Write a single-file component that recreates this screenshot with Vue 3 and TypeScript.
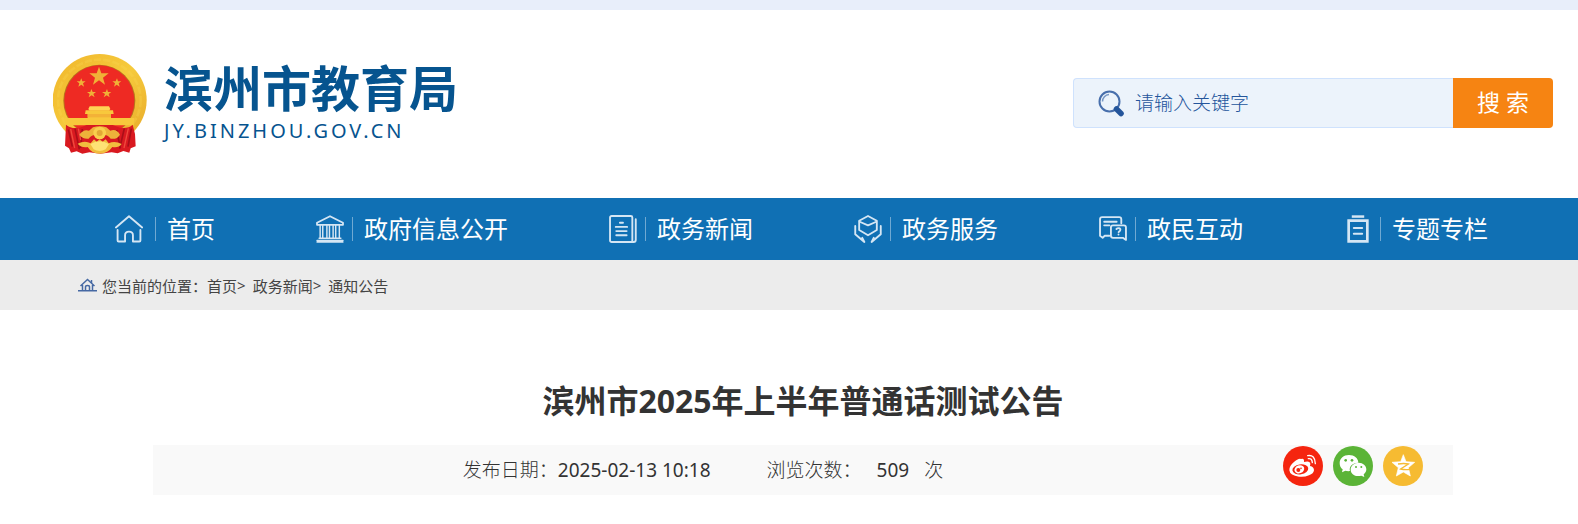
<script setup lang="ts">
import { ref } from 'vue'

interface NavItem {
  icon: string
  label: string
}

const keyword = ref('')

const navItems: NavItem[] = [
  { icon: 'home', label: '首页' },
  { icon: 'hall', label: '政府信息公开' },
  { icon: 'news', label: '政务新闻' },
  { icon: 'service', label: '政务服务' },
  { icon: 'chat', label: '政民互动' },
  { icon: 'topic', label: '专题专栏' },
]
</script>

<template>
  <div class="page">
    <header class="header">
      <a class="brand" href="#" aria-label="滨州市教育局">
        <svg class="emblem" viewBox="39 42 282 300" aria-hidden="true">
          <defs>
            <linearGradient id="gold" x1="0" y1="0" x2="1" y2="1">
              <stop offset="0" stop-color="#f0b62c" />
              <stop offset="0.5" stop-color="#f6ca3c" />
              <stop offset="1" stop-color="#e7a829" />
            </linearGradient>
          </defs>
          <ellipse cx="179" cy="180" rx="141" ry="138" fill="url(#gold)" />
          <ellipse cx="178" cy="180" rx="124" ry="121" fill="none" stroke="#fbdb58" stroke-width="8" stroke-dasharray="22 6" opacity=".25" />
          <ellipse cx="178" cy="182" rx="108" ry="108" fill="#b8741c" />
          <ellipse cx="178" cy="182" rx="105" ry="106" fill="#ee2a23" />
          <g fill="#f0b137">
            <path d="M177 80l7 20 22 0-17 13 6 21-18-13-18 13 6-21-17-13 22 0z" />
            <path d="M124 115l3 9 10 0-8 6 3 10-8-6-9 6 3-10-8-6 10 0z" />
            <path d="M231 115l3 9 10 0-8 6 3 10-9-6-8 6 3-10-8-6 10 0z" />
            <path d="M154 147l4 9 10 0-8 6 4 10-9-6-9 6 3-10-8-6 10 0z" />
            <path d="M201 147l3 9 10 0-8 6 3 10-9-6-9 6 4-10-9-6 11 0z" />
          </g>
          <path d="M149 199h58l4 8-4 5h-58l-4-5z" fill="#ffd454" />
          <path d="M137 211h82l2 11h-8v12h70l-2 22H76l-3-22h70v-12h-8z" fill="#f8c83c" />
          <path d="M143 222h70v10h-70z" fill="#f3b237" />
          <path d="M78 254q16 14 42 9l20-8h78l22 8q24 4 38-9l7 28 2 37-15 6-4 13-18-5-17 7-18-3-34 4-33-4-21 4-17-7-17 4-6-13-12-8z" fill="#d91920" />
          <path d="M85 269l12 51M105 266l13 62M127 267l-5 57M274 266l-10 54M253 265l-14 61M230 270l11 54" fill="none" stroke="#a90f18" stroke-width="5" />
          <path d="M92 267l12 57M115 266l7 34M265 265l-13 59" fill="none" stroke="#f04a3d" stroke-width="4" />
          <path d="M118 284q13-18 29-12l12-10q20-7 40 0l12 10q18-7 29 12-9 15-28 12-9-13-23-12h-20q-15 0-23 12-18 2-28-12z" fill="#edb23a" />
          <circle cx="179" cy="279" r="19" fill="#f9cf4d" />
          <circle cx="179" cy="279" r="9" fill="#e3a835" />
          <path d="M113 311q22-11 39-1l10-12 8 7 9-7 9 7 9-7 9 12q18-9 39 2-10 13-28 9-14 20-38 20t-36-20q-19 3-30-10z" fill="#f1bd3e" />
          <path d="M151 312q28-16 56 0l-10 16q-19 10-36 0z" fill="#fee275" />
        </svg>
        <span class="brand-text">
          <strong class="brand-name">滨州市教育局</strong>
          <span class="brand-url">JY.BINZHOU.GOV.CN</span>
        </span>
      </a>

      <form class="search" role="search" @submit.prevent>
        <div class="search-field">
          <svg class="search-icon" viewBox="0 0 27 27" fill="none" aria-hidden="true">
            <circle cx="11.5" cy="11.5" r="10" stroke="#486fac" stroke-width="2" />
            <path d="M4.500 11.500A7 7 0 0 1 11 4.500" stroke="#7898c4" stroke-width="1.500" />
            <path d="M18.500 19l4.500 4.500" stroke="#24559b" stroke-width="5.500" stroke-linecap="round" />
          </svg>
          <input v-model="keyword" class="search-input" type="text" placeholder="请输入关键字" aria-label="请输入关键字" />
        </div>
        <button class="search-button" type="submit">搜 索</button>
      </form>
    </header>

    <nav class="nav">
      <a v-for="item in navItems" :key="item.label" class="nav-item" href="#">
        <svg class="nav-icon" viewBox="0 0 27 27" fill="none" stroke="#d5e6f4" stroke-width="1.800" stroke-linejoin="round" stroke-linecap="round" aria-hidden="true">
          <template v-if="item.icon === 'home'">
            <path d="M.9 12L13.500 1.200 26.200 12" />
            <path d="M2.500 14.500v10q0 1 1 1h6.200v-6q0-3.500 3.800-3.500t3.800 3.500v6h6.200q1 0 1-1v-10" />
          </template>
          <template v-else-if="item.icon === 'hall'">
            <path d="M1 7.500L13.500 1.200 26 7.500v2H1z" />
            <path d="M4 10v12M6.500 10v12M10.500 10v12M13 10v12M16.500 10v12M19 10v12M22.500 10v12M3 22.500h21M1 26h25M1 24.500h25" stroke-width="1.400" />
          </template>
          <template v-else-if="item.icon === 'news'">
            <rect x="1" y="1" width="21.500" height="25" rx="1.500" />
            <path d="M25.800 4v20q0 2-2 2H20M10.500 7.500h3M6.500 11.500h11M7 15.500h10M7 19.500h10" />
          </template>
          <template v-else-if="item.icon === 'service'">
            <path d="M13.500 1l8.500 4.500v9l-8.500 5-8.500-5v-9z" />
            <path d="M5.500 6.500l8 3.500 8-3.500" />
            <path d="M1.200 10.500v8l8.800 7.500-2-4M25.800 10.500v8L17 26l2-4" />
          </template>
          <template v-else-if="item.icon === 'chat'">
            <path d="M21.500 8V4q0-2-2-2H3Q1 2 1 4v16l2.500 2 2-2H10M5 6.500h12M5 10h5" />
            <path d="M13.500 10h10.500q2 0 2 2v12l-3-2H13.500q-2 0-2-2v-8q0-2 2-2z" />
            <path d="M16.800 13.500q1-1 2.500-.8 2 .6 1 2.300l-1.400 1.500M18.800 18.700v.1" />
          </template>
          <template v-else>
            <path d="M7.500 1.500h12" stroke-width="2.400" stroke-linecap="butt" />
            <path d="M4.500 5.500h18v20h-18z" stroke-width="2.600" stroke-linejoin="miter" />
            <path d="M9.500 12.500h8M9.500 18h8" stroke-width="2" />
          </template>
        </svg>
        <span class="nav-label">{{ item.label }}</span>
      </a>
    </nav>

    <div class="crumbs">
      <svg class="crumb-icon" viewBox="0 0 19 14" fill="none" stroke="#4669a3" stroke-width="1.500" aria-hidden="true">
        <path d="M0 12.700h19M2.500 8L9.500 1.500 16.500 8M4.500 7v5.500M14.500 7v5.500" />
        <path d="M7.500 12.500V8.800q0-1.300 2-1.300t2 1.300v3.700M13.500 2v3" />
      </svg>
      <span>您当前的位置：</span>
      <a href="#">首页</a><span class="sep">&gt;</span>
      <a href="#">政务新闻</a><span class="sep">&gt;</span>
      <a href="#">通知公告</a>
    </div>

    <main class="article">
      <h1 class="title">滨州市2025年上半年普通话测试公告</h1>
      <div class="meta">
        <div class="meta-text">
          <span>发布日期：<span class="figure">2025-02-13 10:18</span></span>
          <span class="views"><span>浏览次数：</span><span class="figure">509</span><span>次</span></span>
        </div>
        <div class="share">
          <a href="#" aria-label="微博">
            <svg viewBox="0 0 120 120" aria-hidden="true">
              <circle cx="60" cy="60" r="60" fill="#f5250f" />
              <path d="M54 39q10-4 9 9 19-5 19 7-1 3-1 5 12 2 12 13-1 10-15 15-14 6-30 4-27-3-29-19-1-12 13-24 14-13 22-10z" fill="#fff" />
              <ellipse cx="52" cy="70" rx="24" ry="15" transform="rotate(-9 52 70)" fill="#f5250f" />
              <ellipse cx="49" cy="70" rx="15" ry="12" transform="rotate(-20 49 70)" fill="#fff" />
              <circle cx="46" cy="72" r="6" fill="#f5250f" />
              <circle cx="54" cy="67" r="2.500" fill="#f5250f" />
              <path d="M74 29q22-4 23 24M76 38q11-2 12 12" fill="none" stroke="#fff" stroke-width="4" stroke-linecap="round" />
            </svg>
          </a>
          <a href="#" aria-label="微信">
            <svg viewBox="0 0 120 120" aria-hidden="true">
              <circle cx="60" cy="60" r="60" fill="#5bb437" />
              <path d="M48 27c16 0 28 10 28 23-17 0-29 12-25 25-5 1-10 0-14-1l-10 5 2-9c-6-4-9-11-9-19 0-14 12-24 28-24z" fill="#fff" />
              <path d="M77 50c13 0 23 9 23 20 0 6-3 11-8 15l2 8-9-4c-18 5-32-5-32-18 0-12 11-21 24-21z" fill="#fff" />
              <g fill="#5bb437"><circle cx="38" cy="43" r="4" /><circle cx="57" cy="43" r="4" /><circle cx="69" cy="63" r="3" /><circle cx="85" cy="63" r="3" /></g>
            </svg>
          </a>
          <a href="#" aria-label="QQ空间">
            <svg viewBox="0 0 120 120" aria-hidden="true">
              <circle cx="60" cy="60" r="60" fill="#f6bb32" />
              <path d="M61 26l8 21 26 2-19 16 6 25-21-12-21 12 6-25-19-16 26-2z" fill="#fff" stroke="#fff" stroke-width="2" stroke-linejoin="round" />
              <path d="M45 54q18-3 31 0L53 69q13 3 28 1" fill="none" stroke="#f6bb32" stroke-width="4" />
            </svg>
          </a>
        </div>
      </div>
    </main>
  </div>
</template>

<style>
body {
  margin: 0;
  background: #fff;
}
</style>

<style scoped>
.page {
  border-top: 10px solid #e8eefa;
  font-family: "Noto Sans", "Noto Sans CJK SC", sans-serif;
  color: #333;
}

a {
  color: inherit;
  text-decoration: none;
}

svg {
  display: block;
  flex: none;
}

.header {
  display: flex;
  align-items: flex-start;
  justify-content: space-between;
  padding: 44px 25px 44px 53px;
}

.brand {
  display: flex;
  gap: 17px;
  color: #06548f;
}

.emblem {
  width: 94px;
  height: 100px;
}

.brand-text {
  display: flex;
  flex-direction: column;
  padding-top: 5px;
}

.brand-name {
  font-size: 49px;
  line-height: 58px;
  font-weight: 700;
}

.brand-url {
  font-size: 20px;
  line-height: 28px;
  letter-spacing: 3px;
}

.search {
  display: flex;
  width: 480px;
  height: 50px;
  margin-top: 24px;
}

.search-field {
  display: flex;
  flex: 1;
  align-items: center;
  gap: 10px;
  min-width: 0;
  padding-left: 24px;
  border: 1px solid #cfe2fd;
  border-right: 0;
  border-radius: 4px 0 0 4px;
  background: #ecf3fb;
}

.search-icon {
  width: 27px;
  height: 27px;
}

.search-input {
  flex: 1;
  min-width: 0;
  padding: 0;
  border: 0;
  outline: 0;
  background: transparent;
  color: #24559b;
  font: 300 19px/28px "Noto Sans", "Noto Sans CJK SC", sans-serif;
}

.search-input::placeholder {
  color: #24559b;
  opacity: 1;
}

.search-button {
  width: 100px;
  padding: 0 0 2px;
  border: 0;
  border-radius: 0 4px 4px 0;
  background: #f68412;
  color: #fff;
  font: 400 23px/28px "Noto Sans", "Noto Sans CJK SC", sans-serif;
}

.nav {
  display: flex;
  align-items: center;
  justify-content: space-between;
  height: 62px;
  padding: 0 90px 0 115px;
  background: #1070b4;
  color: #fff;
}

.nav-item {
  display: flex;
  align-items: center;
  gap: 8px;
}

.nav-item:first-child {
  gap: 12px;
}

.nav-icon {
  width: 28px;
  height: 28px;
}

.nav-label {
  padding-left: 11px;
  border-left: 1px solid #70a9d2;
  font-size: 24px;
  line-height: 24px;
}

.crumbs {
  display: flex;
  align-items: center;
  height: 50px;
  padding-left: 78px;
  background: #ececec;
  color: #444;
  font-size: 15px;
}

.crumb-icon {
  width: 19px;
  height: 14px;
  margin-right: 5px;
}

.sep {
  margin-right: 7px;
}

.article {
  padding: 67px 125px 29px 153px;
}

.title {
  margin: 0 0 20px;
  font-size: 32px;
  line-height: 48px;
  font-weight: 700;
  text-align: center;
}

.meta {
  display: flex;
  height: 50px;
  background: #f9f9f9;
}

.meta-text {
  display: flex;
  flex: 1;
  align-items: center;
  justify-content: center;
  gap: 56px;
  font-size: 19px;
  line-height: 28px;
  font-weight: 300;
}

.figure {
  font-weight: 400;
}

.views {
  display: flex;
  align-items: baseline;
  gap: 15px;
}

.share {
  display: flex;
  gap: 10px;
  padding: 1px 30px 0;
}

.share svg {
  width: 40px;
  height: 40px;
}
</style>
